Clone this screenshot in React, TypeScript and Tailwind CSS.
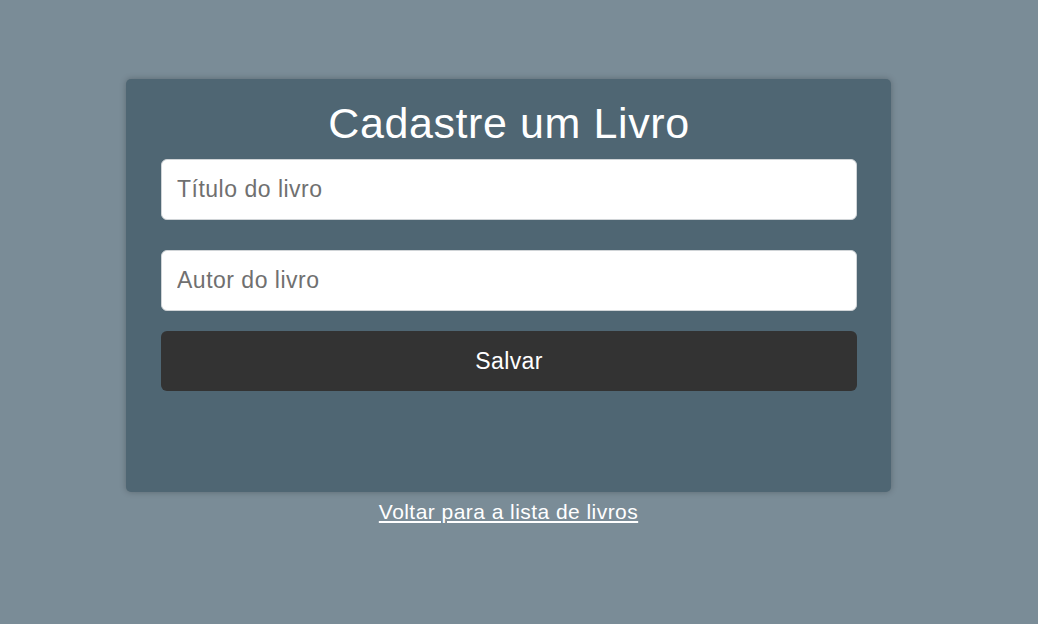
import React from "react";

const font = { fontFamily: '"Liberation Sans", Arial, sans-serif' };

export default function App() {
  return (
    <div className="w-[1038px] h-[624px] bg-[#7a8c97] overflow-hidden" style={font}>
      <div className="pt-[79px] pl-[126px] w-[891px]">
        <div className="w-[765px] h-[413px] bg-[#4f6673] rounded-[5px] shadow-[0_0_6px_rgba(0,0,0,0.25)] pl-[35px] pr-[34px] pt-[20px] flex flex-col">
          <h1 className="text-white text-[43px] leading-[48px] tracking-[0.6px] text-center">
            Cadastre um Livro
          </h1>
          <div className="flex flex-col mt-[12px]">
            <input
              placeholder="Título do livro"
              className="h-[61px] w-full bg-white rounded-[6px] border border-[#d0d4d7] px-[15px] text-[23px] tracking-[0.5px] text-[#333] placeholder:text-[#707070] outline-none"
              style={font}
            />
            <input
              placeholder="Autor do livro"
              className="h-[61px] w-full bg-white rounded-[6px] border border-[#d0d4d7] px-[15px] text-[23px] tracking-[0.5px] text-[#333] placeholder:text-[#707070] outline-none mt-[30px]"
              style={font}
            />
            <button
              className="h-[60px] w-full bg-[#333333] rounded-[6px] text-white text-[23px] tracking-[0.4px] mt-[20px]"
              style={font}
            >
              Salvar
            </button>
          </div>
        </div>
        <div className="text-center mt-[8px] leading-[24px]">
          <a href="#" className="text-white text-[21px] tracking-[0.45px] underline">
            Voltar para a lista de livros
          </a>
        </div>
      </div>
    </div>
  );
}
